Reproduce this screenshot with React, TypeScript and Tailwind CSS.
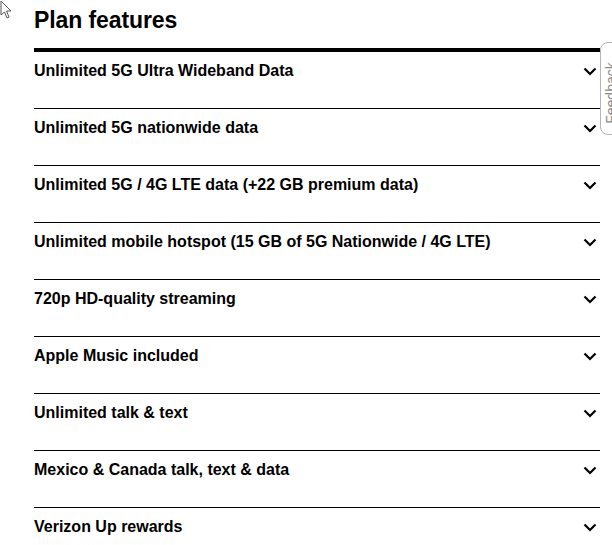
import React from 'react';

const features = [
  'Unlimited 5G Ultra Wideband Data',
  'Unlimited 5G nationwide data',
  'Unlimited 5G / 4G LTE data (+22 GB premium data)',
  'Unlimited mobile hotspot (15 GB of 5G Nationwide / 4G LTE)',
  '720p HD-quality streaming',
  'Apple Music included',
  'Unlimited talk & text',
  'Mexico & Canada talk, text & data',
  'Verizon Up rewards',
];

function Chevron() {
  return (
    <svg width="14" height="9" viewBox="0 0 14 9" fill="none">
      <path d="M1.5 1.5 L7 7 L12.5 1.5" stroke="#000" strokeWidth="2.2" />
    </svg>
  );
}

export default function App() {
  return (
    <div className="relative w-[612px] h-[545px] overflow-hidden bg-white font-['Liberation_Sans',Arial,sans-serif] text-black">
      <div className="pl-[34px] pr-[12px]">
        <h1 className="pt-[6px] h-[48px] text-[23px] font-bold leading-[28px] tracking-[-0.1px]">Plan features</h1>
        <div className="border-t-4 border-black">
          {features.map((f, i) => (
            <div key={i} className="h-[57px] border-b border-black flex items-start justify-between pt-[9px] pr-[3px]">
              <span className="text-[16px] font-bold leading-[20px]">{f}</span>
              <span className="mt-[6px]"><Chevron /></span>
            </div>
          ))}
        </div>
      </div>
      <div className="absolute left-[600px] top-[42px] w-[30px] h-[93px] border border-[#b5b5b5] rounded-l-[8px] bg-white">
        <span className="absolute left-[-30px] top-[42px] w-[80px] text-center -rotate-90 text-[14px] leading-[16px] text-[#8a8a8a] whitespace-nowrap">Feedback</span>
      </div>
      <svg className="absolute left-0 top-0" width="14" height="22" viewBox="0 0 14 22">
        <path d="M1 1 L1 15 L4.5 12 L7 18 L9 17 L6.5 11 L11 11 Z" fill="#fff" stroke="#555" strokeWidth="1" />
      </svg>
    </div>
  );
}
